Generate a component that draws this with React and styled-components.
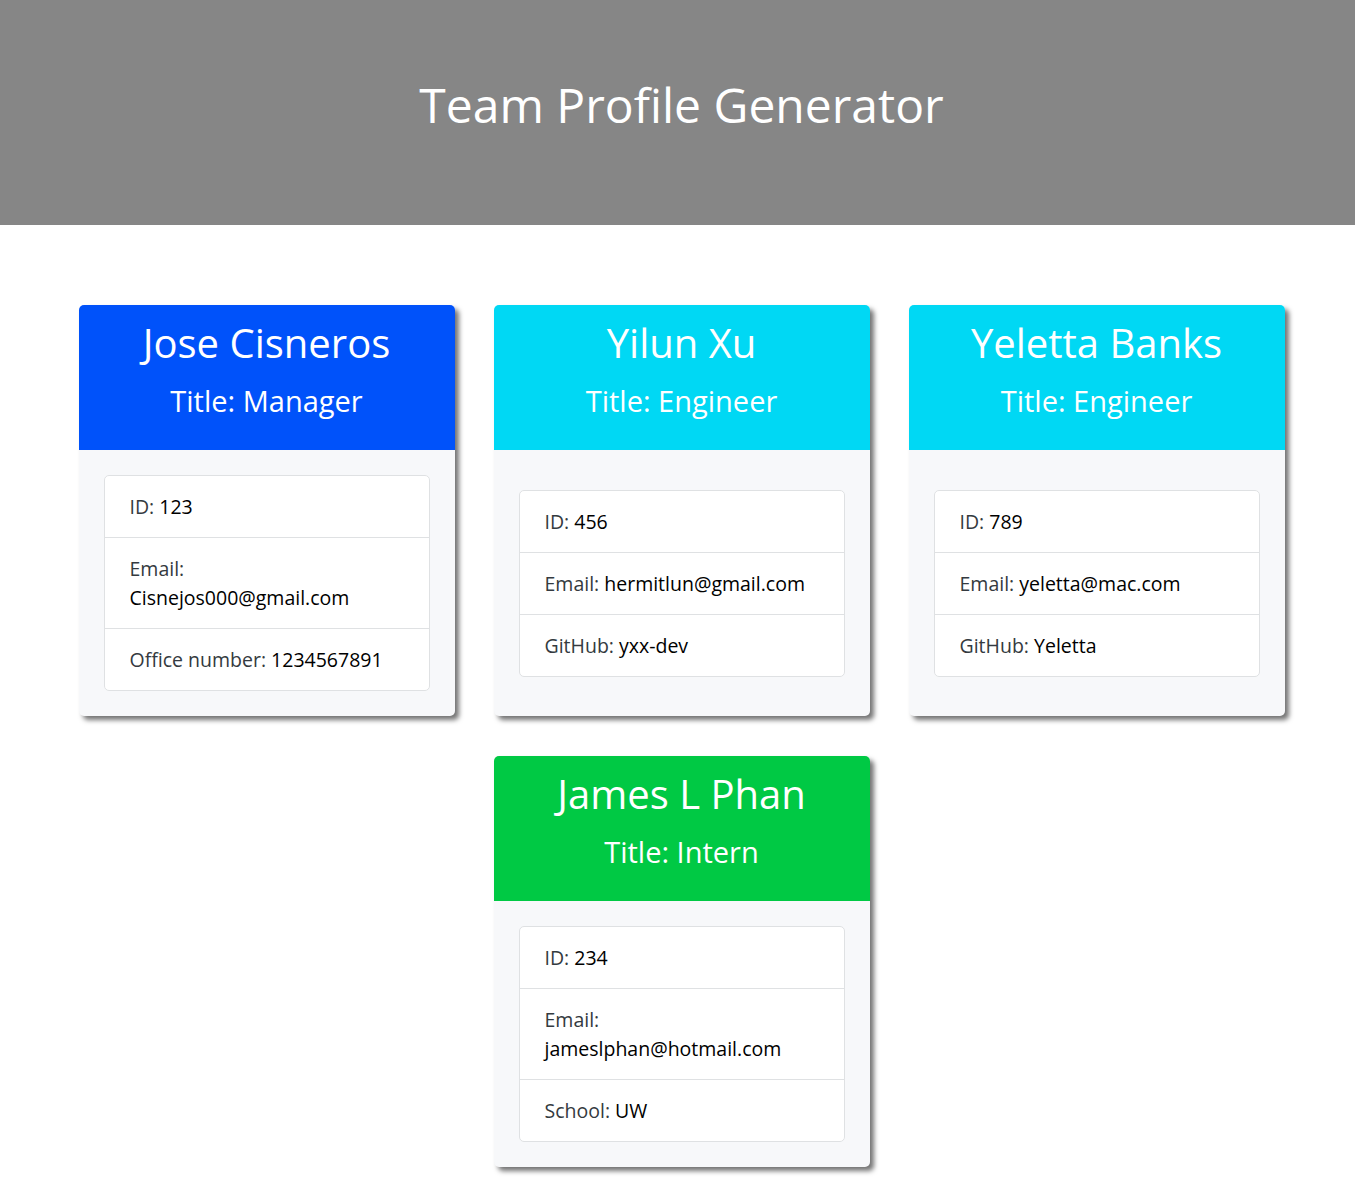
import styled, { createGlobalStyle } from "styled-components"

const GlobalStyle = createGlobalStyle`
    body {
        margin: 0;
        background: #fff;
        font-family: 'Open Sans', 'Noto Sans', sans-serif;
        color: #212529;
    }
`

const team = [
    { name: "Jose Cisneros", role: "Manager", id: "123", email: "Cisnejos000@gmail.com", extraLabel: "Office number", extra: "1234567891" },
    { name: "Yilun Xu", role: "Engineer", id: "456", email: "hermitlun@gmail.com", extraLabel: "GitHub", extra: "yxx-dev" },
    { name: "Yeletta Banks", role: "Engineer", id: "789", email: "yeletta@mac.com", extraLabel: "GitHub", extra: "Yeletta" },
    { name: "James L Phan", role: "Intern", id: "234", email: "jameslphan@hotmail.com", extraLabel: "School", extra: "UW" },
]

const colors = {
    Manager: "#0052fa",
    Engineer: "#00d8f4",
    Intern: "#00c944",
}

export default function App() {
    return (
        <>
            <GlobalStyle />
            <Header>
                <h1>Team Profile Generator</h1>
            </Header>
            <Cards>
                {team.map((p) => (
                    <Card key={p.id}>
                        <CardHead color={colors[p.role]}>
                            <h2>{p.name}</h2>
                            <h3>Title: {p.role}</h3>
                        </CardHead>
                        <CardBody>
                            <List>
                                <Item>ID: <span>{p.id}</span></Item>
                                <Item>Email: <a>{p.email}</a></Item>
                                <Item>{p.extraLabel}: <span>{p.extra}</span></Item>
                            </List>
                        </CardBody>
                    </Card>
                ))}
            </Cards>
        </>
    )
}

const Header = styled.header`
    height: 225px;
    background: #868686;
    display: flex;
    justify-content: center;
    align-items: flex-start;
    box-sizing: border-box;
    padding-top: 76px;
    padding-left: 8px;

    h1 {
        margin: 0;
        color: #fff;
        font-size: 48px;
        font-weight: 400;
        line-height: 1.2;
    }
`

const Cards = styled.main`
    display: flex;
    flex-wrap: wrap;
    justify-content: center;
    gap: 40px 39px;
    width: 1206px;
    margin: 80px auto 35px;
    padding-left: 8px;
`

const Card = styled.section`
    width: 376px;
    display: flex;
    flex-direction: column;
    border-radius: 5px;
    overflow: hidden;
    background: #f7f8fa;
    box-shadow: 4px 4px 5px rgba(0, 0, 0, 0.55);
`

const CardHead = styled.div`
    height: 145px;
    box-sizing: border-box;
    background: ${(p) => p.color};
    color: #fff;
    text-align: center;
    padding-top: 14px;

    h2 {
        margin: 0;
        font-size: 40px;
        font-weight: 400;
        line-height: 48px;
    }

    h3 {
        margin: 17px 0 0;
        font-size: 29px;
        font-weight: 400;
        line-height: 34px;
    }
`

const CardBody = styled.div`
    flex: 1;
    display: flex;
    flex-direction: column;
    justify-content: center;
    padding: 25px;
`

const List = styled.ul`
    list-style: none;
    margin: 0;
    padding: 0;
    background: #fff;
    border: 1px solid #dfe1e3;
    border-radius: 5px;
`

const Item = styled.li`
    padding: 16px 25px;
    font-size: 19.5px;
    line-height: 29px;
    color: #343a40;

    & + & {
        border-top: 1px solid #dfe1e3;
    }

    span, a {
        color: #000;
    }
`
